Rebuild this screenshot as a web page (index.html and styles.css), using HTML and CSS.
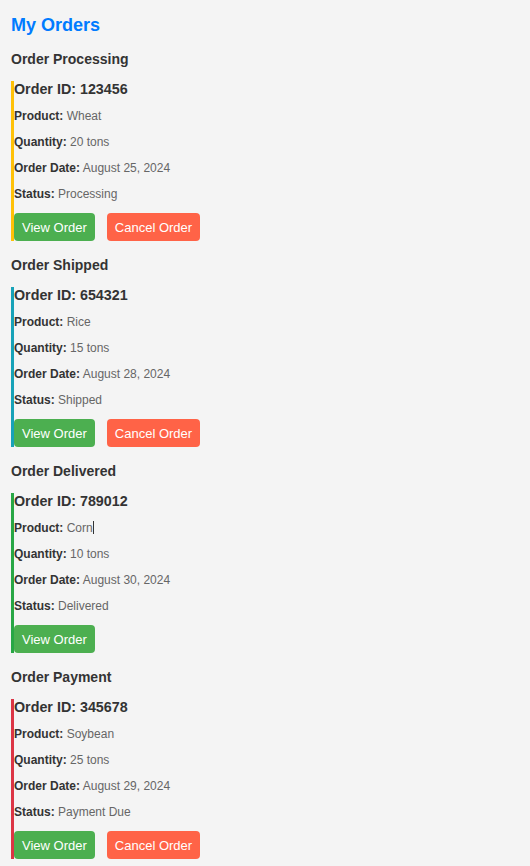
FILE: index.html
```html
<!DOCTYPE html>
<html lang="en">
<head>
<meta charset="utf-8">
<title>My Orders</title>
<link rel="stylesheet" href="styles.css">
</head>
<body>
<h1 class="page-title">My Orders</h1>

<section class="group">
  <h2 class="group-title">Order Processing</h2>
  <div class="order order-processing">
    <h3 class="order-id">Order ID: 123456</h3>
    <p class="field"><span class="label">Product:</span> Wheat</p>
    <p class="field"><span class="label">Quantity:</span> 20 tons</p>
    <p class="field"><span class="label">Order Date:</span> August 25, 2024</p>
    <p class="field"><span class="label">Status:</span> Processing</p>
    <div class="actions">
      <button class="btn btn-view">View Order</button>
      <button class="btn btn-cancel">Cancel Order</button>
    </div>
  </div>
</section>

<section class="group">
  <h2 class="group-title">Order Shipped</h2>
  <div class="order order-shipped">
    <h3 class="order-id">Order ID: 654321</h3>
    <p class="field"><span class="label">Product:</span> Rice</p>
    <p class="field"><span class="label">Quantity:</span> 15 tons</p>
    <p class="field"><span class="label">Order Date:</span> August 28, 2024</p>
    <p class="field"><span class="label">Status:</span> Shipped</p>
    <div class="actions">
      <button class="btn btn-view">View Order</button>
      <button class="btn btn-cancel">Cancel Order</button>
    </div>
  </div>
</section>

<section class="group">
  <h2 class="group-title">Order Delivered</h2>
  <div class="order order-delivered">
    <h3 class="order-id">Order ID: 789012</h3>
    <p class="field"><span class="label">Product:</span> Corn<span class="caret"></span></p>
    <p class="field"><span class="label">Quantity:</span> 10 tons</p>
    <p class="field"><span class="label">Order Date:</span> August 30, 2024</p>
    <p class="field"><span class="label">Status:</span> Delivered</p>
    <div class="actions">
      <button class="btn btn-view">View Order</button>
    </div>
  </div>
</section>

<section class="group">
  <h2 class="group-title">Order Payment</h2>
  <div class="order order-payment">
    <h3 class="order-id">Order ID: 345678</h3>
    <p class="field"><span class="label">Product:</span> Soybean</p>
    <p class="field"><span class="label">Quantity:</span> 25 tons</p>
    <p class="field"><span class="label">Order Date:</span> August 29, 2024</p>
    <p class="field"><span class="label">Status:</span> Payment Due</p>
    <div class="actions">
      <button class="btn btn-view">View Order</button>
      <button class="btn btn-cancel">Cancel Order</button>
    </div>
  </div>
</section>
</body>
</html>
```

FILE: styles.css
```css
* { box-sizing: border-box; }

html, body {
  background: #f4f4f4;
}

body {
  margin: 0;
  padding: 15px 11px 13px;
  font-family: "Liberation Sans", Arial, sans-serif;
  color: #333;
}

.page-title {
  margin: 0 0 15px;
  font-size: 18px;
  line-height: 21px;
  font-weight: bold;
  color: #007bff;
}

.group {
  margin: 0 0 16px;
}

.group-title {
  margin: 0 0 14px;
  font-size: 14px;
  line-height: 16px;
  font-weight: bold;
  color: #333;
}

.order {
  border-left: 3px solid #ccc;
  padding: 0;
}

.order-processing { border-left-color: #ffc107; }
.order-shipped { border-left-color: #17a2b8; }
.order-delivered { border-left-color: #28a745; }
.order-payment { border-left-color: #dc3545; }

.order-id {
  margin: 0 0 12px;
  font-size: 14.3px;
  line-height: 16px;
  font-weight: bold;
  color: #333;
}

.field {
  margin: 0 0 12px;
  font-size: 12px;
  line-height: 14px;
  color: #666;
}

.label {
  font-weight: bold;
  color: #333;
}

.caret {
  display: inline-block;
  width: 1px;
  height: 13px;
  background: #333;
  vertical-align: -2px;
}

.actions {
  display: flex;
  gap: 12px;
}

.btn {
  height: 28px;
  padding: 0 8px;
  border: 0;
  border-radius: 4px;
  font-family: "Liberation Sans", Arial, sans-serif;
  font-size: 13px;
  color: #fff;
  cursor: pointer;
}

.btn-view { background: #4caf50; }
.btn-cancel { background: #ff6347; }
```
